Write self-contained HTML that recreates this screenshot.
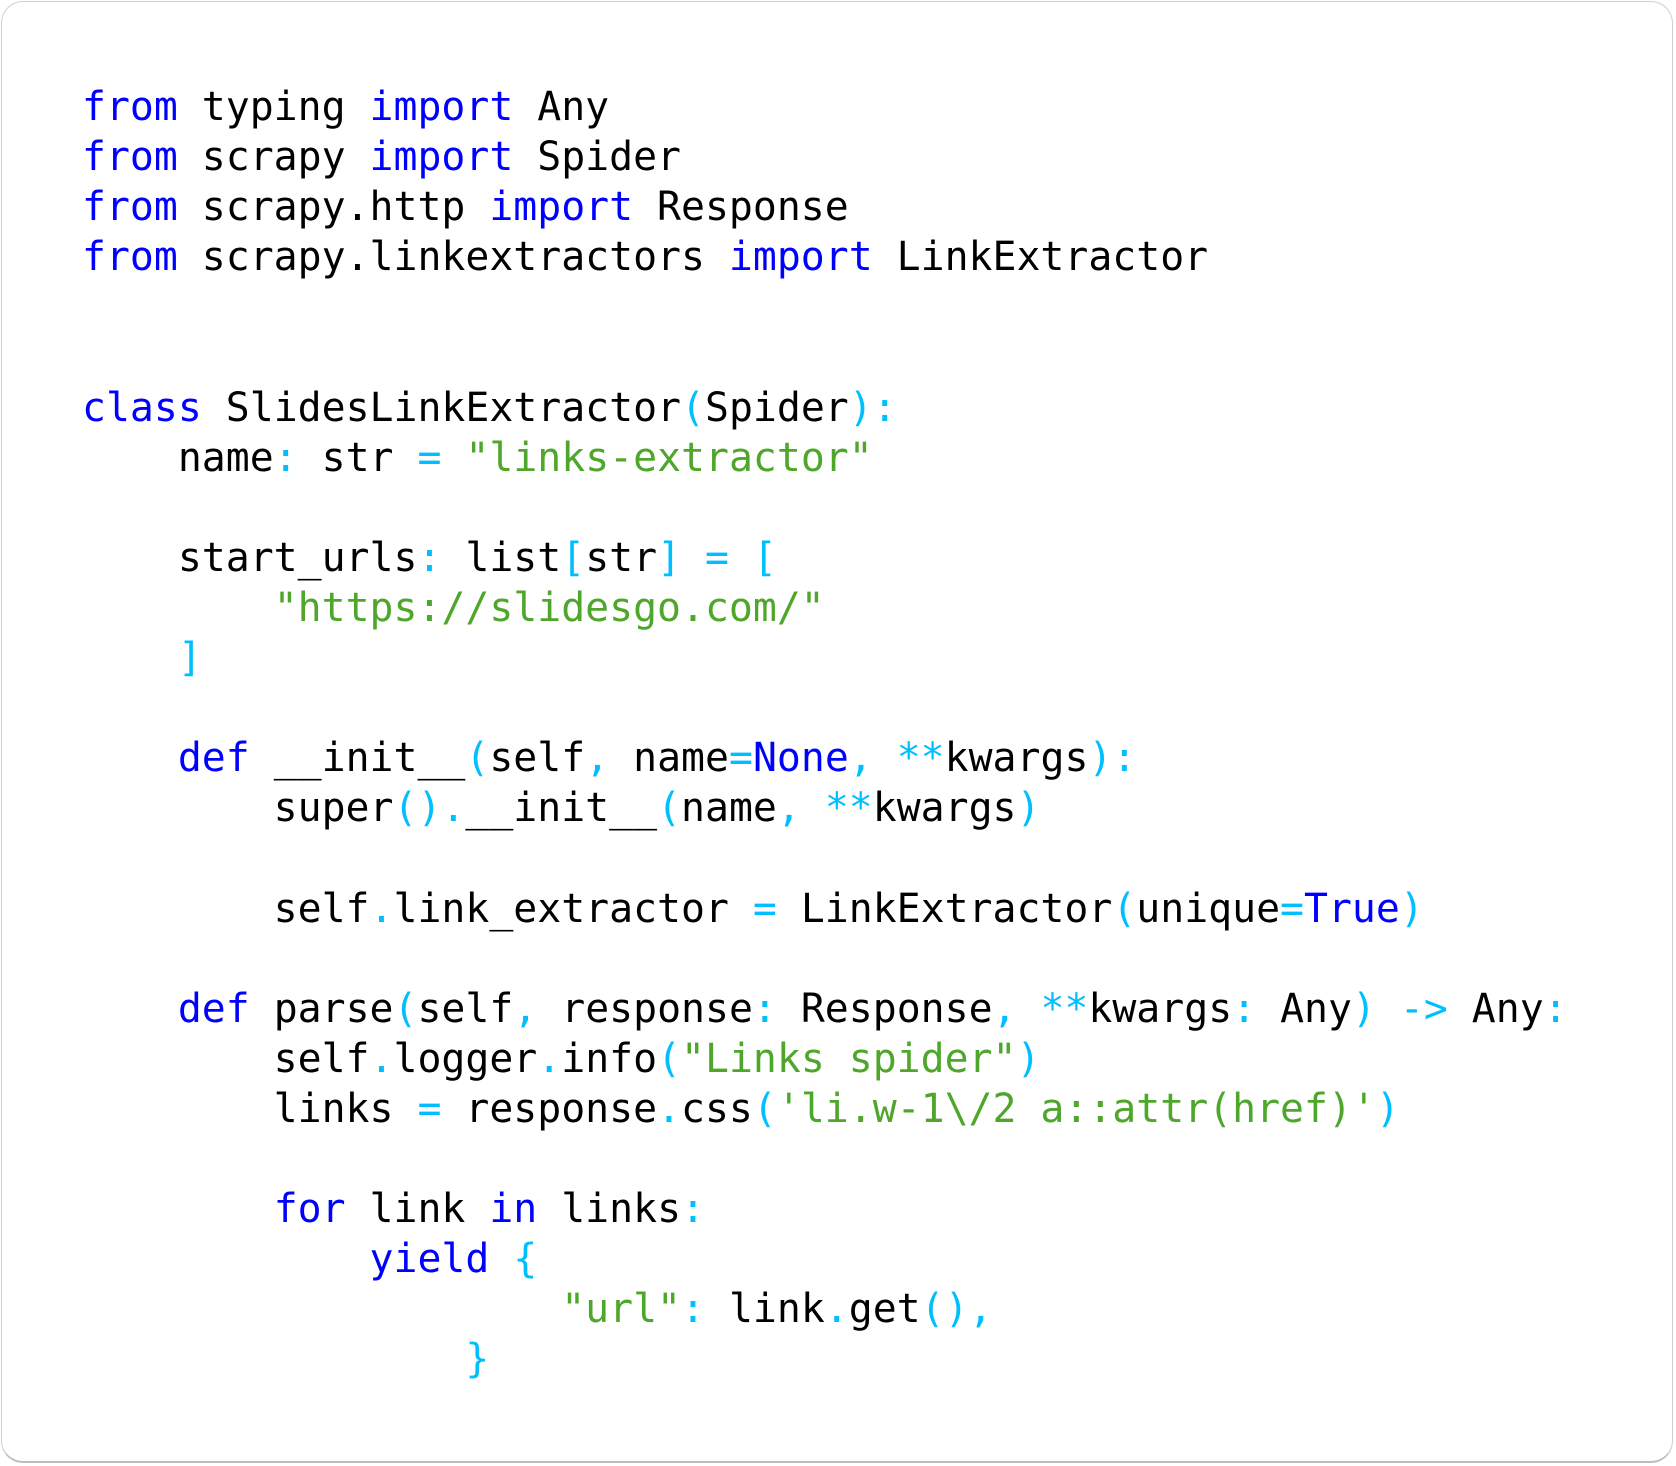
<!DOCTYPE html>
<html><head><meta charset="utf-8"><style>
html,body{margin:0;padding:0;background:#fff;width:1676px;height:1466px;overflow:hidden}
.card{position:absolute;left:1px;top:1px;width:1672px;height:1462px;border:1px solid #cfcfcf;border-bottom:2px solid #bdbdbd;border-radius:22px;box-sizing:border-box;background:#fff}
pre{position:absolute;left:82px;top:82px;margin:0;font-family:"DejaVu Sans Mono","Liberation Mono",monospace;font-size:39.8px;line-height:50.1px;color:#000}
.k{color:#0000ff}.p{color:#00bfff}.s{color:#4ea72a}
</style></head><body><div class="card"></div>
<pre><span class="k">from</span> typing <span class="k">import</span> Any
<span class="k">from</span> scrapy <span class="k">import</span> Spider
<span class="k">from</span> scrapy.http <span class="k">import</span> Response
<span class="k">from</span> scrapy.linkextractors <span class="k">import</span> LinkExtractor


<span class="k">class</span> SlidesLinkExtractor<span class="p">(</span>Spider<span class="p">):</span>
    name<span class="p">:</span> str <span class="p">=</span> <span class="s">"links-extractor"</span>

    start_urls<span class="p">:</span> list<span class="p">[</span>str<span class="p">]</span> <span class="p">=</span> <span class="p">[</span>
        <span class="s">"https://slidesgo.com/"</span>
    <span class="p">]</span>

    <span class="k">def</span> __init__<span class="p">(</span>self<span class="p">,</span> name<span class="p">=</span><span class="k">None</span><span class="p">,</span> <span class="p">**</span>kwargs<span class="p">):</span>
        super<span class="p">().</span>__init__<span class="p">(</span>name<span class="p">,</span> <span class="p">**</span>kwargs<span class="p">)</span>

        self<span class="p">.</span>link_extractor <span class="p">=</span> LinkExtractor<span class="p">(</span>unique<span class="p">=</span><span class="k">True</span><span class="p">)</span>

    <span class="k">def</span> parse<span class="p">(</span>self<span class="p">,</span> response<span class="p">:</span> Response<span class="p">,</span> <span class="p">**</span>kwargs<span class="p">:</span> Any<span class="p">)</span> <span class="p">-&gt;</span> Any<span class="p">:</span>
        self<span class="p">.</span>logger<span class="p">.</span>info<span class="p">(</span><span class="s">"Links spider"</span><span class="p">)</span>
        links <span class="p">=</span> response<span class="p">.</span>css<span class="p">(</span><span class="s">'li.w-1\/2 a::attr(href)'</span><span class="p">)</span>

        <span class="k">for</span> link <span class="k">in</span> links<span class="p">:</span>
            <span class="k">yield</span> <span class="p">{</span>
                    <span class="s">"url"</span><span class="p">:</span> link<span class="p">.</span>get<span class="p">(),</span>
                <span class="p">}</span>
</pre></body></html>
